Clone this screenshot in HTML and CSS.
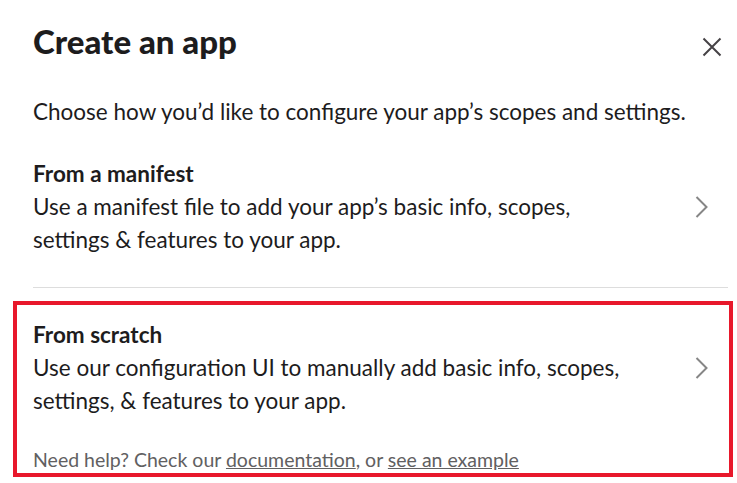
FILE: index.html
```html
<!DOCTYPE html>
<html lang="en">
<head>
<meta charset="utf-8">
<title>Create an app</title>
<link rel="stylesheet" href="styles.css">
</head>
<body>
<div class="modal">
  <div class="header">
    <h1 class="title">Create an app</h1>
    <button class="close" aria-label="Close">
      <svg width="20" height="20" viewBox="0 0 20 20"><path d="M1.5 1.5 L18.5 18.5 M18.5 1.5 L1.5 18.5" stroke="#454245" stroke-width="2" fill="none"/></svg>
    </button>
  </div>
  <p class="intro">Choose how you’d like to configure your app’s scopes and settings.</p>
  <div class="option first">
    <div class="option-text">
      <div class="option-title">From a manifest</div>
      <div class="option-desc">Use a manifest file to add your app’s basic info, scopes, settings &amp; features to your app.</div>
    </div>
    <svg class="chevron" width="13" height="22" viewBox="0 0 13 22"><polyline points="1.5,1 11.5,11 1.5,21" stroke="#868686" stroke-width="2" fill="none"/></svg>
  </div>
  <div class="scratch">
    <div class="option">
      <div class="option-text">
        <div class="option-title">From scratch</div>
        <div class="option-desc">Use our configuration UI to manually add basic info, scopes, settings, &amp; features to your app.</div>
      </div>
      <svg class="chevron" width="13" height="22" viewBox="0 0 13 22"><polyline points="1.5,1 11.5,11 1.5,21" stroke="#868686" stroke-width="2" fill="none"/></svg>
    </div>
    <p class="help">Need help? Check our <a href="#">documentation</a>, or <a href="#">see an example</a></p>
    <div class="highlight"></div>
  </div>
</div>
</body>
</html>
```
FILE: styles.css
```css
* { box-sizing: border-box; }
html, body { margin: 0; padding: 0; background: #ffffff; }
body {
  font-family: Lato, "Noto Sans", sans-serif;
  color: #1d1c1d;
  height: 483px;
  overflow: hidden;
}
.modal {
  padding: 21px 9px 0 33px;
}
.header {
  display: flex;
  justify-content: space-between;
  align-items: center;
  padding-right: 6px;
}
.title {
  margin: 0;
  font-size: 33px;
  line-height: 40px;
  font-weight: 900;
}
.close {
  border: 0;
  background: none;
  padding: 0;
  width: 20px;
  height: 20px;
  display: flex;
  margin-top: 12px;
}
.intro {
  margin: 34px 0 0;
  font-size: 22.5px;
  line-height: 33px;
}
.option {
  display: flex;
  align-items: center;
  justify-content: space-between;
  padding: 29px 20px 31px 0;
}
.option.first {
  border-bottom: 1px solid #dddddd;
}
.scratch {
  position: relative;
}
.scratch .option {
  padding: 30px 20px 0 0;
}
.option-text {
  width: 600px;
}
.option-title {
  font-size: 22.5px;
  line-height: 33px;
  font-weight: 700;
}
.option-desc {
  font-size: 22.5px;
  line-height: 33px;
}
.chevron {
  flex: none;
}
.help {
  margin: 29px 0 0;
  font-size: 19.5px;
  line-height: 28px;
  color: #616061;
}
.help a {
  color: #616061;
  text-decoration: underline;
}
.highlight {
  position: absolute;
  top: 13px;
  left: -20px;
  right: -5px;
  bottom: -3px;
  border: 4px solid #e8182b;
  pointer-events: none;
}
```
